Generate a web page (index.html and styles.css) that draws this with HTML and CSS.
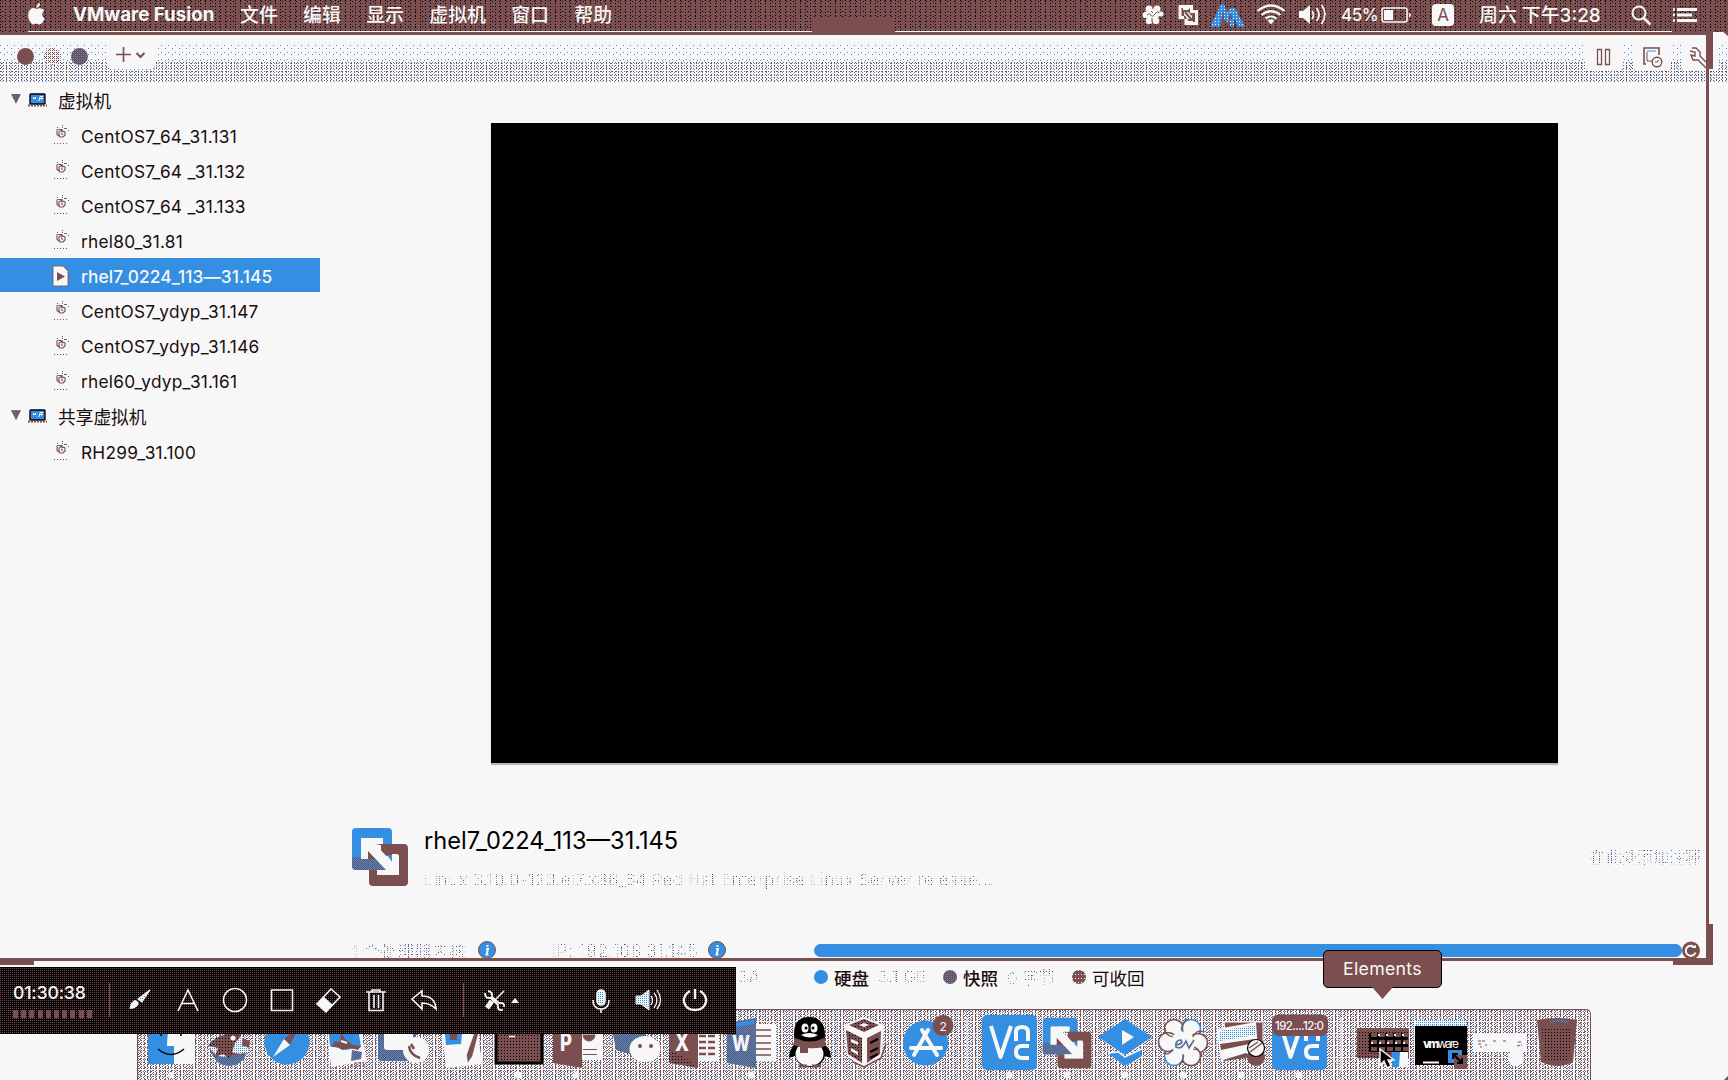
FILE: index.html
```html
<!DOCTYPE html>
<html lang="zh-CN">
<head>
<meta charset="utf-8">
<title>VMware Fusion</title>
<link rel="stylesheet" href="styles.css">
</head>
<body>
<svg class="defs" width="0" height="0" aria-hidden="true">
  <defs>
    <pattern id="mix" width="2" height="2" patternUnits="userSpaceOnUse"><rect width="2" height="2" fill="#348fe2"/><rect width="1" height="1" fill="#7b4e50"/><rect x="1" y="1" width="1" height="1" fill="#7b4e50"/></pattern>
    <pattern id="darkmix" width="3" height="3" patternUnits="userSpaceOnUse"><rect width="3" height="3" fill="#7b4e50"/><rect width="1" height="1" fill="#000"/></pattern>
    <pattern id="bluedots" width="2" height="2" patternUnits="userSpaceOnUse"><rect width="2" height="2" fill="#f7f7f7"/><rect width="1" height="1" fill="#348fe2"/></pattern>
    <pattern id="bluelight" width="3" height="3" patternUnits="userSpaceOnUse"><rect width="3" height="3" fill="#348fe2"/><rect width="1" height="1" fill="#f7f7f7"/></pattern>
    <symbol id="laptop" viewBox="0 0 20 14"><rect x="2" y="1" width="15" height="10" rx="1" fill="#348fe2" stroke="#000" stroke-width="1.4"/><path d="M10 8l2-5h3v3zM5 4h3v2H5z" fill="url(#bluedots)"/><path d="M0 12.500h19" stroke="#7b4e50" stroke-width="2" stroke-dasharray="2 1"/><path d="M17.500 1v10" stroke="#7b4e50"/></symbol>
    <symbol id="vm" viewBox="0 0 18 20"><path d="M4 4.500h5v3M4 4.500v5l2 1.500M8 5.500l4 1.500v3l-2 2h-3l-1-2v-3zM8 8.500l2 1" fill="none" stroke="#7b4e50" stroke-width="1.100"/><path d="M9.500 0v3M11 3.500h4M15.500 5v2M4 2.500h2" stroke="#7b4e50" stroke-dasharray="1 1"/><path d="M4 4.500h2M12 3.500h1" stroke="#348fe2"/><path d="M1 18.500h14" stroke="#7b4e50" stroke-dasharray="1 2"/></symbol>
    <symbol id="fusion" viewBox="0 0 58 60"><path d="M5 1h32q4 0 4 4v14H30v-8H10v20h12v12H5q-4 0-4-4V5q0-4 4-4z" fill="#348fe2"/><path d="M1 30h9l1 2h12v11H5q-4 0-4-4z" fill="url(#mix)"/><path d="M25 17h28q4 0 4 4v34q0 4-4 4H22q-4 0-4-4V43h9v5h21V28h-7v-7z" fill="#7b4e50"/><path d="M30 17h15v12H30z" fill="#7b4e50"/><path d="M18 24v9h9z" fill="#7b4e50"/><path d="M17 32h18v11H17z" fill="url(#mix)"/><path d="M17 23v9h12z" fill="#7b4e50"/><path d="M36 28h5v7z" fill="#348fe2"/><path d="M10 11h22v6h-8l17 18v-8h6v21H26v-5h9L17 24v8h-7z" fill="#f7f7f7"/></symbol>
    <symbol id="info" viewBox="0 0 18 18"><circle cx="9" cy="9" r="8.500" fill="#348fe2" stroke="#7b4e50" stroke-width="1"/><path d="M9.500 4v2M8 8h2l-1.500 5.500h2" fill="none" stroke="#f7f7f7" stroke-width="2"/></symbol>
  </defs>
</svg>

<header class="menubar">
  <svg class="apple" width="17" height="22" viewBox="0 0 17 22"><path d="M8.500 6C6 4.500 3.500 5 2 6.800-.6 10-.2 15 2 18.500c1.500 2.500 3 3.500 4.500 2.800 1.400-.6 2.600-.6 4 0 1.500.7 3-.3 4.300-2.300.9-1.300 1.500-2.500 1.900-3.700-3.200-1.500-3.300-5.700-.3-7.500C14.700 5 11 4.700 8.500 6zM8.300 4.800C8.200 2.300 10 .5 12 0c.3 2.600-1.600 4.700-3.700 4.800z" fill="#f7f7f7"/></svg>
  <b class="app">VMware Fusion</b>
  <nav class="menus"><span>文件</span><span>编辑</span><span>显示</span><span>虚拟机</span><span>窗口</span><span>帮助</span></nav>
  <div class="status">
    <svg width="35" height="30" viewBox="1138 0 35 30"><g fill="#f7f7f7"><circle cx="1153" cy="15" r="6"/><circle cx="1149" cy="9" r="3.500"/><circle cx="1157" cy="9" r="3.500"/><circle cx="1161" cy="14" r="2.500"/><circle cx="1156" cy="21" r="3.300"/><circle cx="1149" cy="21" r="3.300"/><circle cx="1146" cy="15" r="3.300"/></g><path d="M1147 15q3-3 4 0t4-1 4-1M1151 11l2 2M1152 18v4" fill="none" stroke="#7b4e50"/></svg>
    <svg width="35" height="30" viewBox="1173 0 35 30"><g fill="none" stroke="#f7f7f7" stroke-width="3"><path d="M1191.500 13V6.500h-11.500v11h4"/><path d="M1192 11.500h4.500v12H1186v-5"/></g><path d="M1183 8h7l-3 3 5 5 1-2v8h-8l3-3-5-5z" fill="#f7f7f7"/><path d="M1183 16v-5h5M1185 12l7 8M1193 15v5h-5" fill="none" stroke="#7b4e50" stroke-width="2"/></svg>
    <svg width="42" height="30" viewBox="1208 0 42 30"><path d="M1210 27l11-23h3l3 8 4-4h4l10 19h-7l-4-9v9h-4v-8l-3 4-4-4v8z" fill="url(#bluelight)"/><path d="M1223 10l-3 17h5zM1231 13l-3 6h4z" fill="#7b4e50"/></svg>
    <svg width="42" height="30" viewBox="1250 0 42 30"><g fill="none" stroke="#f7f7f7" stroke-width="2.200"><path d="M1257.500 11q13.500-11 27 0M1261.500 15q9.500-7.500 19 0M1265.500 18.500q5.500-4 11 0"/></g><path d="M1267.500 20.500q3.500-2.500 7 0l-3.500 4z" fill="#f7f7f7"/></svg>
    <svg width="44" height="30" viewBox="1292 0 44 30"><path d="M1299 11h4l7-6v19l-7-6h-4z" fill="#f7f7f7"/><g fill="none" stroke="#f7f7f7" stroke-width="1.800"><path d="M1312 11q3 4 0 8M1316.500 8q5 7 0 13M1321.500 5q7 9 0 19"/></g></svg>
    <span class="pct">45%</span>
    <svg width="51" height="30" viewBox="1381 0 51 30"><rect x="1382" y="8" width="25" height="14" rx="2" fill="none" stroke="#f7f7f7" stroke-width="1.600"/><path d="M1384 10h9v10h-9z" fill="#f7f7f7"/><path d="M1409 12.500q4 2.500 0 5z" fill="#f7f7f7"/></svg>
    <span class="input">A</span>
    <span class="clock">周六 下午3:28</span>
    <svg width="40" height="30" viewBox="1625 0 40 30"><circle cx="1639" cy="13" r="6.500" fill="none" stroke="#f7f7f7" stroke-width="2"/><path d="M1643.500 18l7 6.500" stroke="#f7f7f7" stroke-width="2.400"/></svg>
    <svg width="63" height="30" viewBox="1665 0 63 30"><path d="M1677 9.500h20M1677 15h15M1677 20.500h20" stroke="#f7f7f7" stroke-width="2.800"/><path d="M1673 9.500h2M1673 15h2M1673 20.500h2" stroke="#f7f7f7" stroke-width="2.400"/></svg>
  </div>
</header>

<section class="window">
  <div class="toolbar">
    <i class="light close"></i><i class="light mini"></i><i class="light full"></i>
    <span class="tool add"><svg width="48" height="29" viewBox="0 0 48 29"><path d="M9 14.500h15M16.500 7v15" stroke="#7b4e50" stroke-width="1.600"/><path d="M29.500 13l4 4 4-4" fill="none" stroke="#7b4e50" stroke-width="2"/></svg></span>
    <span class="tools">
      <span class="tool"><svg width="38" height="31" viewBox="1585 40 38 31"><path d="M1597.500 49.500h4v15h-4zM1605.500 49.500h4v15h-4z" fill="none" stroke="#7b4e50" stroke-width="1.300"/></svg></span>
      <span class="tool"><svg width="38" height="31" viewBox="1633 40 38 31"><path d="M1646 64h-2V48h15v7" fill="none" stroke="#7b4e50" stroke-width="1.600"/><path d="M1647 51h9" stroke="#348fe2"/><path d="M1647 52v9h5" fill="none" stroke="#7b4e50"/><circle cx="1657" cy="62" r="4.800" fill="#f7f7f7" stroke="#7b4e50" stroke-width="1.400"/><path d="M1655 62h2l2-2" fill="none" stroke="#7b4e50"/></svg></span>
      <span class="tool"><svg width="38" height="31" viewBox="1681 40 38 31"><path d="M1692 48h4l4 4v4l9 9M1690 51l5 1v4l-4-1 2 5h5l8 8" fill="none" stroke="#7b4e50" stroke-width="1.400"/></svg></span>
    </span>
  </div>
  <div class="content">
    <aside class="sidebar">
      <div class="row group"><i class="tri"></i><svg class="lap"><use href="#laptop"/></svg><span>虚拟机</span></div>
      <div class="row"><svg class="ico"><use href="#vm"/></svg><span>CentOS7_64_31.131</span></div>
      <div class="row"><svg class="ico"><use href="#vm"/></svg><span>CentOS7_64 _31.132</span></div>
      <div class="row"><svg class="ico"><use href="#vm"/></svg><span>CentOS7_64 _31.133</span></div>
      <div class="row"><svg class="ico"><use href="#vm"/></svg><span>rhel80_31.81</span></div>
      <div class="row selected"><svg class="ico" viewBox="0 0 18 20"><path d="M0 0h10l5 5v15H0z" fill="#f7f7f7" stroke="#7b4e50" stroke-width=".8"/><path d="M4 6l8 4.500-8 4.500z" fill="#7b4e50"/></svg><span>rhel7_0224_113—31.145</span></div>
      <div class="row"><svg class="ico"><use href="#vm"/></svg><span>CentOS7_ydyp_31.147</span></div>
      <div class="row"><svg class="ico"><use href="#vm"/></svg><span>CentOS7_ydyp_31.146</span></div>
      <div class="row"><svg class="ico"><use href="#vm"/></svg><span>rhel60_ydyp_31.161</span></div>
      <div class="row group"><i class="tri"></i><svg class="lap"><use href="#laptop"/></svg><span>共享虚拟机</span></div>
      <div class="row"><svg class="ico"><use href="#vm"/></svg><span>RH299_31.100</span></div>
    </aside>
    <main class="main">
      <div class="preview"></div>
      <div class="summary">
        <svg class="vmlogo" width="58" height="60"><use href="#fusion"/></svg>
        <div class="titles"><h1>rhel7_0224_113—31.145</h1><p class="faint">Linux 3.10.0-123.el7.x86_64 Red Hat Enterprise Linux Server release...</p></div>
        <span class="notes faint">在此处添加注释</span>
      </div>
      <div class="specs">
        <span class="cpu faint">1 个处理器内核</span><svg class="inf"><use href="#info"/></svg>
        <span class="ip faint">IP: 192.168.31.145</span><svg class="inf"><use href="#info"/></svg>
        <div class="bar"></div>
        <svg class="reset" width="18" height="19" viewBox="0 0 18 19"><circle cx="9" cy="9.500" r="9" fill="#7b4e50"/><path d="M12.500 6.500a5 5 0 1 0 1 5" fill="none" stroke="#f7f7f7" stroke-width="2"/><path d="M9 7h5V4z" fill="#f7f7f7"/></svg>
      </div>
      <div class="legend">
        <span class="mac faint">3A</span>
        <i class="dot blue"></i><span class="k k1">硬盘</span><span class="v v1 faint">3.1 GB</span>
        <i class="dot snap"></i><span class="k k1">快照</span><span class="v v2 faint">0 字节</span>
        <i class="dot back"></i><span class="k">可收回</span>
      </div>
    </main>
  </div>
</section>

<svg class="frame" width="1728" height="1080" viewBox="0 0 1728 1080">
  <path d="M28 31h1644v1H28z" fill="#f7f7f7"/>
  <path d="M0 32h1706v3H0zM812 18h83v14h-83zM1672 31h41v38h-7V35h-34zM1706 69h3v889h-3zM0 958h1709v3H0zM0 961h34v4H0zM1709 924h4v41h-40v-4h33v-3h3z" fill="#7b4e50"/>
  <path d="M1722 31h6v5zM1728 1076v4h-4z" fill="#7b4e50"/>
</svg>

<footer class="dock">
  <svg width="58" height="70" viewBox="142 1010 58 70"><path d="M148 1019h45v45h-45z" fill="#f7f7f7"/><path d="M148 1019h23q-4 14-4 27h7v18h-26z" fill="#348fe2"/><path d="M158 1049q13 11 26 0M161 1030v6M181 1030v6" fill="none" stroke="#000" stroke-width="1.500"/><circle cx="171" cy="1075" r="3" fill="#f7f7f7"/></svg>
  <svg width="58" height="70" viewBox="200 1010 58 70"><path d="M209 1048a21 21 0 0 0 40-1l1-6-22-8z" fill="#7b4e50"/><path d="M213 1055h33q-5 11-17 11t-16-11z" fill="url(#mix)"/><path d="M209 1048q6-10 16-11l9-10 9 3-1 16q7 0 7 5-7 5-18 1-4 9-16 2z" fill="url(#bluedots)"/><path d="M208 1046q7-10 17-11 8-11 17-10 2 10-7 18l-5 16-7-5-8 3 3-9z" fill="url(#darkmix)"/><circle cx="233" cy="1038" r="2.500" fill="#f7f7f7"/></svg>
  <svg width="58" height="70" viewBox="258 1010 58 70"><circle cx="287" cy="1042" r="22.500" fill="#348fe2"/><path d="M299 1027l-9 18-6-6z" fill="#7b4e50"/><path d="M273 1057l11-18 6 6z" fill="#f7f7f7"/></svg>
  <svg width="58" height="70" viewBox="316 1010 58 70"><path d="M326 1022l32-3 9 42-36 6z" fill="#f7f7f7"/><path d="M328 1023l29-2 4 26-15 3-16-4z" fill="#348fe2"/><path d="M331 1047l4-6 5 1 1-10 4 7 8 6 8 1-3 4-8-2-8 2-4-3z" fill="#7b4e50"/><path d="M341 1041l6 2" stroke="#f7f7f7" stroke-width="2"/><path d="M352 1050l10 2-1 7-10 2z" fill="url(#mix)"/><path d="M350 1066h15M354 1063h10" stroke="#7b4e50" stroke-dasharray="3 1"/></svg>
  <svg width="58" height="70" viewBox="374 1010 58 70"><rect x="378" y="1020" width="38" height="41" rx="4" fill="url(#mix)"/><rect x="384" y="1025" width="29" height="25" rx="3" fill="#f7f7f7"/><circle cx="416" cy="1050" r="13" fill="#f7f7f7"/><path d="M409 1046q1 9 11 12M411 1044l3 5" fill="none" stroke="#7b4e50" stroke-width="2.500"/></svg>
  <svg width="58" height="70" viewBox="432 1010 58 70"><path d="M441 1022l36 2 5 40-36 4z" fill="#f7f7f7"/><path d="M444 1023l19 1-2 20-15 1z" fill="#348fe2"/><path d="M450 1033h7v7h-7z" fill="#7b4e50"/><path d="M475 1032l3 1-6 23-4 6-1-7z" fill="#7b4e50" stroke="#7b4e50" stroke-width=".5"/></svg>
  <svg width="58" height="70" viewBox="490 1010 58 70"><rect x="496" y="1018" width="46" height="45" fill="url(#darkmix)" stroke="#000" stroke-width="3"/><path d="M509 1036.500h6" stroke="#f7f7f7" stroke-width="1.600"/><circle cx="518" cy="1075" r="3.500" fill="#f7f7f7"/></svg>
  <svg width="58" height="70" viewBox="548 1010 58 70"><path d="M580 1024h22v36h-22z" fill="#f7f7f7"/><path d="M583 1035a6 6 0 1 0 12 0zM583 1049.500h14M583 1054.500h14" fill="#7b4e50" stroke="#7b4e50"/><path d="M553 1022l29-4v50l-29-5z" fill="#7b4e50"/><text x="560" y="1051" class="office" textLength="12" lengthAdjust="spacingAndGlyphs">P</text><circle cx="576" cy="1075" r="3.500" fill="#f7f7f7"/></svg>
  <svg width="58" height="70" viewBox="606 1010 58 70"><path d="M611 1024h35v24l-13 7-17-5z" fill="url(#mix)"/><ellipse cx="645" cy="1049" rx="15.500" ry="13" fill="#f7f7f7"/><circle cx="640" cy="1046" r="2" fill="#7b4e50"/><circle cx="651" cy="1046" r="2" fill="#7b4e50"/></svg>
  <svg width="58" height="70" viewBox="664 1010 58 70"><path d="M696 1024h23v37h-23z" fill="#f7f7f7"/><path d="M699 1036h16M699 1042h16M699 1048h16M699 1054h16" stroke="#7b4e50" stroke-width="2.500" stroke-dasharray="7 2"/><path d="M669 1022l29-4v50l-29-5z" fill="#7b4e50"/><path d="M669 1050l14 6 14 11-28-5z" fill="url(#darkmix)"/><text x="675" y="1051" class="office" textLength="14" lengthAdjust="spacingAndGlyphs">X</text></svg>
  <svg width="58" height="70" viewBox="722 1010 58 70"><path d="M755 1024h21v37h-21z" fill="#f7f7f7"/><path d="M756 1030h15M756 1036h15M756 1043h15M756 1049h15M756 1055h15" stroke="#7b4e50" stroke-width="1.500"/><path d="M727 1023l29-5v50l-29-5z" fill="url(#mix)"/><path d="M728 1024l26-4v4l-26 4z" fill="#348fe2"/><text x="732" y="1051" class="office w" textLength="18" lengthAdjust="spacingAndGlyphs">W</text><circle cx="751" cy="1075" r="3.500" fill="#f7f7f7"/></svg>
  <svg width="58" height="70" viewBox="780 1010 58 70"><path d="M794 1034q0-17 15-17t16 17q0 5-1 9l6 8 1 7-6-2q-3 11-15 11t-15-11l-6 2 1-7 5-8q-1-4-1-9z" fill="#000"/><ellipse cx="809.500" cy="1054" rx="14" ry="12" fill="#f7f7f7"/><path d="M795 1038q15 7 29 0l2 8q-8 3-18 2v5h-8v-6l-7-2z" fill="#7b4e50"/><ellipse cx="805" cy="1028" rx="3.500" ry="4.500" fill="#f7f7f7"/><ellipse cx="814" cy="1028" rx="3.500" ry="4.500" fill="#f7f7f7"/><circle cx="806" cy="1028" r="1.500"/><circle cx="813" cy="1028" r="1.500"/><path d="M801 1035q8-4 17 0-8 5-17 0z" fill="#f7f7f7"/><path d="M799 1066h8M812 1066h9" stroke="#7b4e50" stroke-width="3"/></svg>
  <svg width="58" height="70" viewBox="838 1010 58 70"><path d="M844 1025l20-8 20 8-2 31-18 11-17-12z" fill="#f7f7f7"/><path d="M849 1025l15-6 15 6-15 7z" fill="url(#darkmix)"/><path d="M859 1025l5-2 5 2-5 2z" fill="#f7f7f7"/><path d="M846 1030l16 8v25l-14-9z" fill="url(#darkmix)"/><path d="M867 1038l14-7-1 23-13 9z" fill="#7b4e50"/><path d="M851 1039l7 3v3l-7-3zM851 1048l7 4v3l-7-4z" fill="#f7f7f7"/><path d="M870 1043l8-4M870 1052l8-4M870 1058l8-4" stroke="#000" stroke-width="2"/><path d="M853 1062l11 5 17-9 5-14" fill="none" stroke="#7b4e50" stroke-width="1.500"/></svg>
  <svg width="58" height="70" viewBox="896 1010 58 70"><circle cx="925.500" cy="1043" r="22.500" fill="#348fe2"/><path d="M928 1030l-14 25M922 1030l15 25M911 1048h30" stroke="#f7f7f7" stroke-width="4" stroke-linecap="round"/><circle cx="943" cy="1025.500" r="10.500" fill="#7b4e50"/><text x="939.500" y="1030.500" class="badge">2</text></svg>
  <i class="sep"></i>
  <svg width="58" height="70" viewBox="980 1010 58 70"><rect x="982" y="1015" width="55" height="55" rx="5" fill="#348fe2"/><path d="M991 1026l9.500 31 10.500-31M1016 1041v-9q0-5 6-5t6 5v9M1029 1046h-7q-6 0-6 6t6 6h7" class="vnc"/><circle cx="1009" cy="1075" r="3.500" fill="#f7f7f7"/></svg>
  <svg width="58" height="70" viewBox="1038 1010 58 70"><use href="#fusion" x="1041" y="1017" width="52" height="52"/><circle cx="1067" cy="1075" r="3.500" fill="#f7f7f7"/></svg>
  <svg width="58" height="70" viewBox="1096 1010 58 70"><path d="M1125 1019l27 18-27 18-27-18z" fill="#348fe2"/><path d="M1122 1030l12 7-12 8z" fill="#f7f7f7"/><path d="M1109 1054l8-3 8 6 17-8v7l-17 10z" fill="#348fe2"/><path d="M1108 1053l10-1 7 5 17-8" fill="none" stroke="#f7f7f7" stroke-width="1.500"/><circle cx="1125" cy="1075" r="3.500" fill="#f7f7f7"/></svg>
  <svg width="58" height="70" viewBox="1154 1010 58 70"><g fill="#f7f7f7" stroke-width="1.600"><circle cx="1174" cy="1029" r="9.500" stroke="#7b4e50"/><circle cx="1191" cy="1029" r="9.500" stroke="#348fe2"/><circle cx="1198" cy="1043" r="9.500" stroke="#7b4e50"/><circle cx="1191" cy="1056" r="9.500" stroke="#7b4e50"/><circle cx="1174" cy="1056" r="9.500" stroke="#348fe2"/><circle cx="1168" cy="1042" r="9.500" stroke="#7b4e50"/></g><circle cx="1183" cy="1043" r="12" fill="#f7f7f7"/><path d="M1183 1032q-2-8 4-13M1193 1037q3-8 11-5M1193 1049q9 1 9 8M1183 1054q1 7-4 11M1173 1049q-4 7-10 4M1173 1037q-9-2-8-9" fill="none" stroke="#7b4e50" stroke-width="1.200"/><path d="M1175 1045q9-1 6-5-6 0-5 7 6 3 10-6l3 7 5-8" fill="none" stroke="url(#mix)" stroke-width="1.700"/><circle cx="1183" cy="1075" r="3.500" fill="#f7f7f7"/></svg>
  <svg width="58" height="70" viewBox="1212 1010 58 70"><path d="M1224 1022h39v28h-36z" fill="#7b4e50" stroke="#f7f7f7"/><path d="M1217 1029l39-7 2 30-37 10z" fill="#f7f7f7"/><path d="M1219 1031l37-6v10l-36 6z" fill="url(#bluedots)"/><path d="M1220 1044l35-5-1 4-33 7z" fill="#7b4e50"/><path d="M1223 1060l23-7 6 4-28 4z" fill="#7b4e50"/><circle cx="1256" cy="1057" r="9" fill="#7b4e50"/><circle cx="1256" cy="1048" r="8.500" fill="#f7f7f7" stroke="#000" stroke-width="1.200"/><path d="M1250 1052l12-9M1249 1048l9-6" stroke="#7b4e50" stroke-width="1.500"/><circle cx="1241" cy="1075" r="3.500" fill="#f7f7f7"/></svg>
  <svg width="58" height="70" viewBox="1270 1010 58 70"><rect x="1272" y="1015" width="55" height="55" rx="5" fill="#348fe2"/><path d="M1281 1026l9.500 31 10.500-31M1306 1041v-9q0-5 6-5t6 5v9M1319 1046h-7q-6 0-6 6t6 6h7" class="vnc"/><rect x="1272" y="1014.500" width="56" height="21.500" rx="7" fill="#7b4e50"/><text x="1275" y="1029.500" class="addr" textLength="49">192....12:0</text><circle cx="1299" cy="1075" r="3.500" fill="#f7f7f7"/></svg>
  <i class="sep"></i>
  <svg width="58" height="70" viewBox="1354 1010 58 70"><path d="M1357 1028h52v30h-52z" fill="url(#darkmix)"/><path d="M1357 1028h52v4h-52z" fill="#7b4e50"/><path d="M1369 1033h39v19h-39z" fill="#000"/><path d="M1371 1035h37M1371 1042h37M1371 1049h37" stroke="#7b4e50" stroke-width="4" stroke-dasharray="6 2"/><path d="M1378 1035h30M1371 1043h36" stroke="#f7f7f7" stroke-width="2" stroke-dasharray="2 6"/><path d="M1392 1052h9v15h-9z" fill="#348fe2"/><path d="M1400 1052h8v15h-9z" fill="#f7f7f7"/></svg>
  <svg width="58" height="70" viewBox="1412 1010 58 70"><path d="M1415 1020h52v5h-52z" fill="url(#bluedots)"/><path d="M1415 1026h52v39h-52z"/><text x="1423" y="1048" class="vmw" textLength="36"><tspan font-weight="800">vm</tspan>ware</text><path d="M1423 1062.500h16" stroke="#f7f7f7" stroke-width="2"/><path d="M1448 1050h14v13h-14z" fill="#348fe2"/><path d="M1454 1055h13v14h-13z" fill="#7b4e50"/><path d="M1453 1054l9 9M1453 1059v-5h5M1462 1058v5h-5" fill="none" stroke="#000" stroke-width="2"/></svg>
  <svg width="58" height="70" viewBox="1470 1010 58 70"><path d="M1473 1034h53v18h-53z" fill="#f7f7f7"/><path d="M1478 1041h8M1478 1044h3M1480 1047h2M1485 1045h2M1493 1041h4M1503 1041h4M1517 1046l5-1M1518 1042h4" stroke="#7b4e50" stroke-dasharray="3 1"/><circle cx="1516" cy="1058" r="8" fill="#f7f7f7"/></svg>
  <svg width="58" height="70" viewBox="1528 1010 58 70"><path d="M1537 1020q20-4 40 0l-4 42q-15 8-32 0z" fill="#7b4e50"/><path d="M1542 1028h30l-3 31q-12 6-25 0z" fill="url(#darkmix)"/><path d="M1550 1022q10-2 18 0" stroke="url(#mix)" stroke-width="2" fill="none"/></svg>
</footer>

<section class="recorder">
  <div class="time"><b>01:30:38</b><i class="meter"></i></div>
  <svg width="643" height="66" viewBox="92 967 643 66">
    <g fill="none" stroke="#f7f7f7" stroke-width="1.600">
      <path d="M109.500 983v34M463.500 983v34" stroke="#7b4e50" stroke-width="1"/>
      <path d="M130 1008.500q1-7 5-8 4 1 3 4-2 4-8 4z" fill="#f7f7f7" stroke-width="1"/><path d="M138 999l12-9-8 12z" fill="url(#bluedots)" stroke-width="1.200"/>
      <path d="M178 1011l10-21 10 21M182 1003.500h12"/>
      <circle cx="235" cy="1000" r="11.500"/>
      <path d="M271.500 990h21v20.500h-21z"/>
      <path d="M331 989l9 8-14 15-9-8z"/><path d="M324 997l9 8-7 7-9-8z" fill="#f7f7f7" stroke="none"/>
      <path d="M366 992h20M372 992v-2h8v2M369 992v18.500h14V992M374 995v13M378.500 995v13"/>
      <path d="M412 999l10-8v5q13 0 14 13-6-6-14-6v6z"/>
      <path d="M504 991l-11 11" stroke-width="1.600"/><path d="M492 1001l-5 7" stroke-width="5"/><path d="M485 993q0 6 6 5l7 7q-1 6 5 5M488 991q5 1 4 6l7 6q6-1 5 4" stroke-width="1.800"/>
      <path d="M511 1003l4-5 4 5z" fill="#f7f7f7" stroke="none"/>
      <rect x="597" y="990" width="8" height="15" rx="4" fill="url(#bluedots)"/><path d="M593 1000q0 9 8 9t8-9M601 1009v4"/>
      <path d="M636 996h5l8-6v20l-8-6h-5z" fill="url(#bluedots)" stroke-width="1"/><path d="M651 996q3 4 0 9M654 993q6 7 0 15M657 990q7 10 0 19" stroke-width="1.300"/>
      <path d="M690 991q-7 4-6 11 2 8 11 8t11-8q1-7-6-11M695 989v10" stroke-width="2.400"/>
    </g>
  </svg>
</section>

<div class="tip">Elements</div>
<svg class="cursor" width="16" height="22" viewBox="0 0 16 22"><path d="M1 1v16l4-4 3 7 4-2-3-6h6z" fill="#000" stroke="#f7f7f7" stroke-width="1.400"/></svg>
</body>
</html>
```

FILE: styles.css
```css
:root {
  --paper: #f7f7f7;
  --brown: #7b4e50;
  --blue: #348fe2;
  --dot-black: conic-gradient(at 1px 1px, transparent 75%, #000 0);
  --dot-brown: conic-gradient(at 1px 1px, transparent 75%, #7b4e50 0);
  --dot-blue: conic-gradient(at 1px 1px, transparent 75%, #348fe2 0);
}
* { box-sizing: border-box; }
body {
  margin: 0;
  width: 1728px;
  height: 1080px;
  overflow: hidden;
  position: relative;
  background: var(--paper);
  color: #1a0d0e;
  font-family: Inter, "Noto Sans CJK SC", sans-serif;
}
svg { display: block; flex: none; }
.defs { position: absolute; }

.menubar {
  height: 32px;
  padding-left: 28px;
  display: flex;
  align-items: flex-start;
  line-height: 30px;
  color: var(--paper);
  background: var(--dot-black) 0 0 / 5px 3px, var(--dot-black) 2px 1px / 7px 5px, var(--brown);
}
.apple { margin-top: 3px; }
.app { margin-left: 28px; width: 141px; font-size: 18.700px; white-space: nowrap; }
.menus { display: flex; gap: 25.300px; margin-left: 26px; padding-top: 1px; font-size: 18.900px; font-weight: 500; white-space: nowrap; }
.status { margin-left: auto; display: flex; font-size: 18.500px; font-weight: 500; }
.pct { width: 45px; padding-left: 5px; font-size: 17px; letter-spacing: -.5px; }
.input { width: 22px; height: 22px; margin-top: 4px; line-height: 22px; border-radius: 4px; background: var(--paper); color: var(--brown); text-align: center; font-size: 17px; font-weight: 400; }
.clock { width: 146px; margin-left: 25px; padding-top: 1px; font-size: 18.900px; white-space: nowrap; }

.toolbar {
  height: 50px;
  padding: 8px 9px 0 14px;
  display: flex;
  align-items: flex-start;
  position: relative;
  isolation: isolate;
}
.toolbar::before, .toolbar::after { content: ""; position: absolute; left: 0; right: 0; z-index: -1; }
.toolbar::before { top: 13px; height: 17px; background: var(--dot-blue) 0 0 / 7px 7px, var(--dot-blue) 4px 3px / 7px 6px; }
.toolbar::after { top: 30px; height: 20px; background: var(--dot-brown) 0 0 / 3px 3px, var(--dot-brown) 1px 1px / 5px 4px, var(--dot-blue) 2px 1px / 4px 3px; }
.light { width: 17px; height: 17px; margin: 8px 10px 0 0; border-radius: 50%; }
.close { background: var(--brown); margin-left: 3px; }
.mini { background: var(--dot-brown) 0 0 / 2px 2px, var(--dot-brown) 1px 1px / 4px 4px, var(--paper); }
.full { background: var(--dot-blue) 0 0 / 2px 2px, var(--brown); }
.tool { display: block; border-radius: 5px; background: var(--paper); }
.add { margin-left: 9px; }
.tools { margin-left: auto; display: flex; gap: 10px; }

.content { display: flex; height: 998px; }
.sidebar { width: 320px; padding-top: .3px; }
.row { height: 35.150px; padding-left: 53px; display: flex; align-items: center; font-size: 17.300px; letter-spacing: .24px; white-space: nowrap; }
.row span { transform: translateY(.5px); }
.ico { width: 18px; height: 20px; margin-right: 10px; overflow: visible; }
.group { padding-left: 11px; font-size: 17.700px; letter-spacing: 0; }
.group span { transform: translateY(-.5px); }
.tri { width: 10px; height: 10px; margin: -2px 7px 0 0; background: var(--dot-blue) 0 0 / 2px 2px, var(--brown); clip-path: polygon(0 0, 100% 0, 50% 100%); }
.lap { width: 20px; height: 14px; margin-right: 10px; }
.selected { color: var(--paper); font-weight: 500; letter-spacing: .1px; background: linear-gradient(var(--blue), var(--blue)) 0 0 / 100% 34px no-repeat; }

.main { width: 1408px; padding-top: 41px; }
.preview { width: 1067px; height: 640px; margin-left: 171px; background: #000; box-shadow: 0 2px 1px #7b4e5066; }
.summary { display: flex; margin: 64px 0 0 31px; height: 60px; }
.titles { margin-left: 15px; }
h1 { margin: 0; font-size: 23.600px; line-height: 28px; font-weight: 400; white-space: nowrap; color: #000; }
.titles p { margin: 13px 0 0; font-size: 16.700px; line-height: 24px; letter-spacing: .31px; white-space: nowrap; }
.faint {
  color: transparent;
  background: var(--dot-brown) 0 0 / 3px 2px, var(--dot-blue) 1px 1px / 4px 3px;
  -webkit-background-clip: text;
  background-clip: text;
}
.notes { margin: 19px 27px 0 auto; font-size: 15.900px; line-height: 24px; }
.specs { display: flex; height: 22px; margin: 52px 0 0 31px; align-items: center; white-space: nowrap; }
.cpu { width: 127px; font-size: 17.200px; }
.inf { width: 18px; height: 18px; }
.ip { margin-left: 56px; width: 156px; font-size: 17.200px; letter-spacing: .4px; }
.bar { margin-left: 88px; width: 868px; height: 13px; border-radius: 7px; background: var(--blue); }
.legend { display: flex; align-items: center; height: 26px; margin: 3px 0 0 418px; font-size: 17.500px; white-space: nowrap; }
.mac { width: 76px; font-size: 17px; }
.dot { width: 14px; height: 14px; margin-right: 6px; border-radius: 50%; }
.blue { background: var(--blue); }
.snap { background: var(--dot-blue) 0 0 / 2px 2px, var(--brown); }
.back { background: conic-gradient(at 1px 1px, transparent 75%, #f7f7f7 0) 0 0 / 3px 4px, var(--brown); }
.k1 { width: 44px; font-weight: 500; }
.v1 { width: 65px; font-size: 17px; }
.v2 { width: 65px; font-size: 16.500px; }

.frame { position: absolute; left: 0; top: 0; }

.dock {
  position: absolute;
  left: 137px;
  top: 1009px;
  width: 1454px;
  height: 71px;
  padding-left: 4px;
  display: flex;
  border: 1px solid var(--brown);
  border-bottom: 0;
  border-radius: 5px 5px 0 0;
  background: var(--dot-brown) 0 0 / 3px 2px, var(--dot-brown) 1px 1px / 4px 3px, var(--dot-brown) 2px 1px / 5px 4px, var(--dot-blue) 2px 3px / 4px 3px, var(--paper);
}
.sep { width: 26px; height: 54px; margin-top: 8px; background: linear-gradient(#f7f7f799, #f7f7f799) 12px 0 / 2px 100% no-repeat; }
.office { font-size: 24px; font-weight: 800; fill: #f7f7f7; }
.w { font-size: 22px; }
.badge { font-size: 12px; fill: #f7f7f7; }
.addr { font-size: 11.500px; font-weight: 500; fill: #f7f7f7; }
.vmw { font-size: 12px; fill: #f7f7f7; }
.vnc { fill: none; stroke: #f7f7f7; stroke-width: 4; stroke-linejoin: round; }

.recorder {
  position: absolute;
  left: 0;
  top: 967px;
  width: 736px;
  height: 67px;
  display: flex;
  border: 1px solid #000;
  border-left: 0;
  background: var(--dot-brown) 0 0 / 2px 2px, #000;
}
.recorder svg { margin-top: -1px; }
.time { width: 92px; padding: 14px 0 0 13px; color: var(--paper); }
.time b { display: block; font-size: 17.700px; line-height: 22px; font-weight: 500; letter-spacing: -.2px; }
.meter { display: block; width: 79px; height: 8px; margin-top: 6px; background: repeating-linear-gradient(90deg, var(--brown) 0 5px, transparent 5px 8.200px); }

.tip {
  position: absolute;
  left: 1323px;
  top: 950px;
  width: 119px;
  height: 38px;
  line-height: 36px;
  border: 1px solid #000;
  border-radius: 5px;
  background: var(--brown);
  color: var(--paper);
  text-align: center;
  font-size: 17.700px;
  letter-spacing: .3px;
}
.tip::after { content: ""; position: absolute; left: 48px; top: 36px; width: 21px; height: 12px; background: var(--brown); clip-path: polygon(0 0, 100% 0, 50% 100%); }
.cursor { position: absolute; left: 1379px; top: 1048px; }
```
